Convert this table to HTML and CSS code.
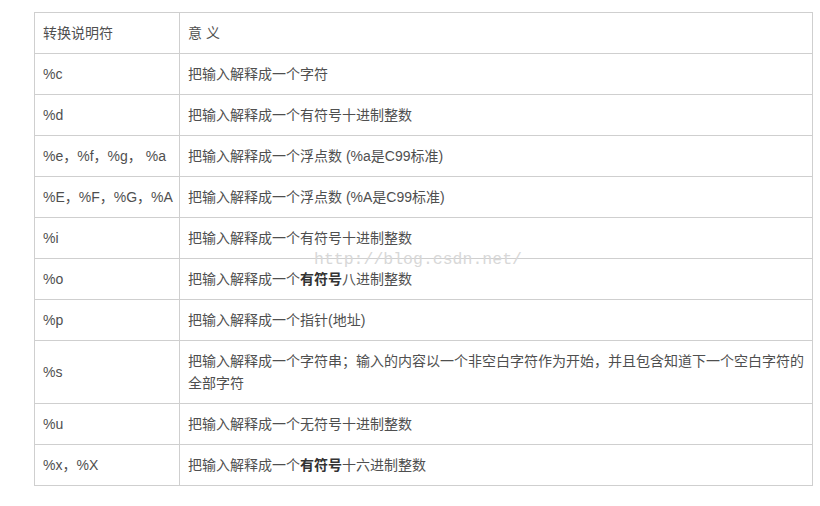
FILE: index.html
```html
<!DOCTYPE html>
<html lang="zh-CN">
<head>
<meta charset="utf-8">
<link rel="stylesheet" href="styles.css">
</head>
<body>
<div class="page">
  <table class="spec">
    <colgroup><col class="c1"><col class="c2"></colgroup>
    <tr><td>转换说明符</td><td>意 义</td></tr>
    <tr><td>%c</td><td>把输入解释成一个字符</td></tr>
    <tr><td>%d</td><td>把输入解释成一个有符号十进制整数</td></tr>
    <tr><td>%e，%f，%g， %a</td><td>把输入解释成一个浮点数 (%a是C99标准)</td></tr>
    <tr><td>%E，%F，%G，%A</td><td>把输入解释成一个浮点数 (%A是C99标准)</td></tr>
    <tr><td>%i</td><td>把输入解释成一个有符号十进制整数</td></tr>
    <tr><td>%o</td><td>把输入解释成一个<b>有符号</b>八进制整数</td></tr>
    <tr><td>%p</td><td>把输入解释成一个指针(地址)</td></tr>
    <tr><td>%s</td><td>把输入解释成一个字符串；输入的内容以一个非空白字符作为开始，并且包含知道下一个空白字符的全部字符</td></tr>
    <tr><td>%u</td><td>把输入解释成一个无符号十进制整数</td></tr>
    <tr><td>%x，%X</td><td>把输入解释成一个<b>有符号</b>十六进制整数</td></tr>
  </table>
  <div class="watermark">http://blog.csdn.net/</div>
</div>
</body>
</html>
```
FILE: styles.css
```css
html, body { margin: 0; padding: 0; background: #fff; }
.page {
  position: relative;
  padding: 12px 0 0 34px;
  width: 779px;
}
.spec {
  border-collapse: collapse;
  width: 779px;
  table-layout: fixed;
  font-family: "Liberation Sans", "Noto Sans CJK SC", sans-serif;
  font-size: 14px;
  color: #4f4f4f;
}
.c1 { width: 145px; }
.spec td {
  border: 1px solid #cfcfcf;
  padding: 9px 8px;
  line-height: 22px;
  vertical-align: middle;
}
.spec td:first-child { white-space: nowrap; overflow: visible; }
.spec b { font-weight: 600; color: #333; }
.watermark {
  position: absolute;
  left: 314px;
  top: 250px;
  font-family: "Liberation Mono", monospace;
  font-size: 16.5px;
  color: #d8d8d8;
}
```
